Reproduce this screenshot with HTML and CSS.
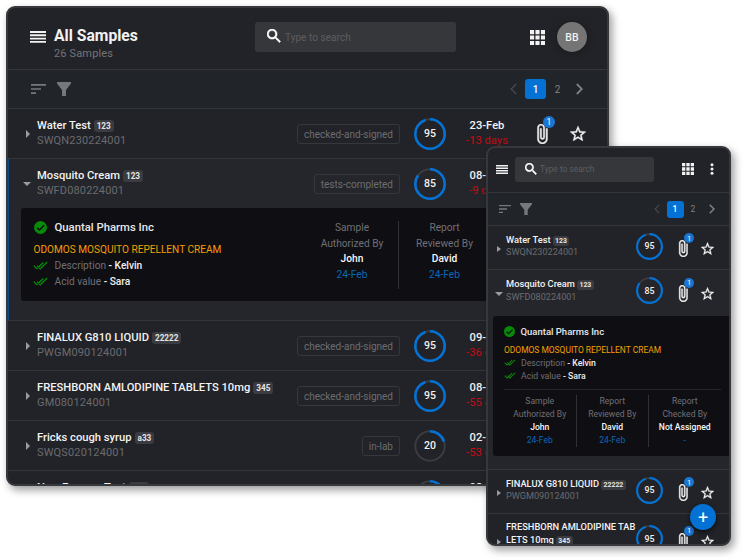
FILE: index.html
```html
<!DOCTYPE html>
<html lang="en">
<head>
<meta charset="utf-8">
<title>All Samples</title>
<link rel="stylesheet" href="styles.css">
</head>
<body>
<svg class="defs" aria-hidden="true">
  <symbol id="menu" viewBox="0 0 16 12"><path d="M0 1h16M0 4.3h16M0 7.6h16M0 10.9h16" stroke="currentColor" stroke-width="1.9"/></symbol>
  <symbol id="search" viewBox="3 3 18 18"><path fill="currentColor" stroke="currentColor" stroke-width=".7" d="M15.5 14h-.79l-.28-.27A6.47 6.47 0 0 0 16 9.5 6.5 6.5 0 1 0 9.5 16c1.61 0 3.09-.59 4.23-1.57l.27.28v.79l5 4.99L20.49 19l-4.99-5zm-6 0C7.01 14 5 11.99 5 9.5S7.01 5 9.5 5 14 7.01 14 9.5 11.99 14 9.5 14z"/></symbol>
  <symbol id="apps" viewBox="0 0 16 16"><path fill="currentColor" d="M0 0h4.4v4.4H0zM5.8 0h4.4v4.4H5.8zM11.6 0H16v4.4h-4.4zM0 5.8h4.4v4.4H0zM5.8 5.8h4.4v4.4H5.8zM11.6 5.8H16v4.4h-4.4zM0 11.6h4.4V16H0zM5.8 11.6h4.4V16H5.8zM11.6 11.6H16V16h-4.4z"/></symbol>
  <symbol id="dots" viewBox="0 0 4 12"><circle cx="2" cy="1.7" r="1.5" fill="currentColor"/><circle cx="2" cy="6" r="1.5" fill="currentColor"/><circle cx="2" cy="10.3" r="1.5" fill="currentColor"/></symbol>
  <symbol id="sort" viewBox="3 6 18 12"><path fill="currentColor" d="M3 18h6v-2H3v2zM3 6v2h18V6H3zm0 7h12v-2H3v2z"/></symbol>
  <symbol id="funnel" viewBox="0 0 14 14"><path fill="currentColor" d="M0 0h14v1.6L9 8v6H5V8L0 1.6z"/></symbol>
  <symbol id="left" viewBox="0 0 7 12"><path d="M6.2 1L1.2 6l5 5" fill="none" stroke="currentColor" stroke-width="1.5"/></symbol>
  <symbol id="right" viewBox="0 0 7 12"><path d="M.8 1l5 5-5 5" fill="none" stroke="currentColor" stroke-width="1.8"/></symbol>
  <symbol id="clip" viewBox="6 1 12 22"><path fill="currentColor" stroke="currentColor" stroke-width=".5" d="M16.5 6v11.5c0 2.21-1.79 4-4 4s-4-1.79-4-4V5a2.5 2.5 0 0 1 5 0v10.5c0 .55-.45 1-1 1s-1-.45-1-1V6H10v9.5a2.5 2.5 0 0 0 5 0V5c0-2.21-1.79-4-4-4S7 2.790 7 5v12.500c0 3.040 2.460 5.500 5.500 5.500s5.500-2.460 5.500-5.500V6h-1.500z"/></symbol>
  <symbol id="star" viewBox="2 2 20 19"><path fill="currentColor" stroke="currentColor" stroke-width=".5" d="M22 9.240l-7.190-.62L12 2 9.190 8.630 2 9.240l5.460 4.730L5.820 21 12 17.270 18.180 21l-1.630-7.030L22 9.240zM12 15.400l-3.760 2.270 1-4.280-3.320-2.880 4.380-.38L12 6.100l1.710 4.040 4.380.38-3.320 2.880 1 4.280L12 15.400z"/></symbol>
  <symbol id="ok" viewBox="0 0 14 14"><circle cx="7" cy="7" r="7" fill="#078a07"/><path d="M3.4 7.300l2.500 2.500 5-5.200" fill="none" stroke="#0f0e13" stroke-width="1.500"/></symbol>
  <symbol id="checks" viewBox="0 0 15 9"><path d="M.8 4.600l3 3.200M4.200 4.600l3 3.200L14.200 1M3.800 7.800L10.300 1.500" fill="none" stroke="#078a07" stroke-width="1.300"/></symbol>
  <symbol id="ring95" viewBox="0 0 32 32"><circle class="track" cx="16" cy="16" r="14.700"/><circle class="arc" cx="16" cy="16" r="14.700" pathLength="100" stroke-dasharray="95 100"/></symbol>
  <symbol id="ring85" viewBox="0 0 32 32"><circle class="track" cx="16" cy="16" r="14.700"/><circle class="arc" cx="16" cy="16" r="14.700" pathLength="100" stroke-dasharray="85 100"/></symbol>
  <symbol id="ring20" viewBox="0 0 32 32"><circle class="track" cx="16" cy="16" r="14.700"/><circle class="arc" cx="16" cy="16" r="14.700" pathLength="100" stroke-dasharray="20 100"/></symbol>
</svg>

<main class="window desktop">
  <header class="header">
    <svg class="menu"><use href="#menu"/></svg>
    <div class="heading"><h1>All Samples</h1><p>26 Samples</p></div>
    <div class="search"><svg><use href="#search"/></svg><span>Type to search</span></div>
    <svg class="apps"><use href="#apps"/></svg>
    <div class="avatar">BB</div>
  </header>
  <div class="toolbar">
    <svg class="sort"><use href="#sort"/></svg>
    <svg class="funnel"><use href="#funnel"/></svg>
    <nav class="pager"><svg class="prev"><use href="#left"/></svg><b>1</b><span>2</span><svg><use href="#right"/></svg></nav>
  </div>
  <section class="sample">
    <div class="row">
      <i class="arrow"></i>
      <div class="info"><div class="name">Water Test<em>123</em></div><div class="code">SWQN230224001</div></div>
      <span class="chip">checked-and-signed</span>
      <div class="ring"><svg><use href="#ring95"/></svg><b>95</b></div>
      <div class="due"><b>23-Feb</b><span>-13 days</span></div>
      <div class="attach"><svg><use href="#clip"/></svg><span>1</span></div>
      <svg class="star"><use href="#star"/></svg>
    </div>
  </section>
  <section class="sample open">
    <div class="row">
      <i class="arrow"></i>
      <div class="info"><div class="name">Mosquito Cream<em>123</em></div><div class="code">SWFD080224001</div></div>
      <span class="chip">tests-completed</span>
      <div class="ring"><svg><use href="#ring85"/></svg><b>85</b></div>
      <div class="due"><b>08-Feb</b><span>-9 days</span></div>
    </div>
    <div class="panel">
      <div class="tests">
        <h2><svg><use href="#ok"/></svg>Quantal Pharms Inc</h2>
        <h3>ODOMOS MOSQUITO REPELLENT CREAM</h3>
        <p><svg><use href="#checks"/></svg>Description <b>- Kelvin</b></p>
        <p><svg><use href="#checks"/></svg>Acid value <b>- Sara</b></p>
      </div>
      <div class="signoffs">
        <div><span>Sample</span><span>Authorized By</span><b>John</b><time>24-Feb</time></div>
        <div><span>Report</span><span>Reviewed By</span><b>David</b><time>24-Feb</time></div>
      </div>
    </div>
  </section>
  <section class="sample">
    <div class="row">
      <i class="arrow"></i>
      <div class="info"><div class="name">FINALUX G810 LIQUID<em>22222</em></div><div class="code">PWGM090124001</div></div>
      <span class="chip">checked-and-signed</span>
      <div class="ring"><svg><use href="#ring95"/></svg><b>95</b></div>
      <div class="due"><b>09-Feb</b><span>-36 days</span></div>
    </div>
  </section>
  <section class="sample">
    <div class="row">
      <i class="arrow"></i>
      <div class="info"><div class="name">FRESHBORN AMLODIPINE TABLETS 10mg<em>345</em></div><div class="code">GM080124001</div></div>
      <span class="chip">checked-and-signed</span>
      <div class="ring"><svg><use href="#ring95"/></svg><b>95</b></div>
      <div class="due"><b>08-Feb</b><span>-55 days</span></div>
    </div>
  </section>
  <section class="sample">
    <div class="row">
      <i class="arrow"></i>
      <div class="info"><div class="name">Fricks cough syrup<em>a33</em></div><div class="code">SWQS020124001</div></div>
      <span class="chip">in-lab</span>
      <div class="ring"><svg><use href="#ring20"/></svg><b>20</b></div>
      <div class="due"><b>02-Feb</b><span>-53 days</span></div>
    </div>
  </section>
  <section class="sample">
    <div class="row">
      <i></i>
      <div class="info"><div class="name">New Enzyme Test<em>123</em></div><div class="code">&nbsp;</div></div>
      <span></span>
      <div class="ring"><svg><use href="#ring20"/></svg></div>
      <div class="due"><b>02-Feb</b><span>&nbsp;</span></div>
    </div>
  </section>
</main>

<main class="window mobile">
  <header class="header">
    <svg class="menu"><use href="#menu"/></svg>
    <div class="search"><svg><use href="#search"/></svg><span>Type to search</span></div>
    <svg class="apps"><use href="#apps"/></svg>
    <svg class="dots"><use href="#dots"/></svg>
  </header>
  <div class="toolbar">
    <svg class="sort"><use href="#sort"/></svg>
    <svg class="funnel"><use href="#funnel"/></svg>
    <nav class="pager"><svg class="prev"><use href="#left"/></svg><b>1</b><span>2</span><svg><use href="#right"/></svg></nav>
  </div>
  <section class="sample">
    <div class="row">
      <i class="arrow"></i>
      <div class="info"><div class="name">Water Test<em>123</em></div><div class="code">SWQN230224001</div></div>
      <div class="ring"><svg><use href="#ring95"/></svg><b>95</b></div>
      <div class="attach"><svg><use href="#clip"/></svg><span>1</span></div>
      <svg class="star"><use href="#star"/></svg>
    </div>
  </section>
  <section class="sample open">
    <div class="row">
      <i class="arrow"></i>
      <div class="info"><div class="name">Mosquito Cream<em>123</em></div><div class="code">SWFD080224001</div></div>
      <div class="ring"><svg><use href="#ring85"/></svg><b>85</b></div>
      <div class="attach"><svg><use href="#clip"/></svg><span>1</span></div>
      <svg class="star"><use href="#star"/></svg>
    </div>
    <div class="panel">
      <div class="tests">
        <h2><svg><use href="#ok"/></svg>Quantal Pharms Inc</h2>
        <h3>ODOMOS MOSQUITO REPELLENT CREAM</h3>
        <p><svg><use href="#checks"/></svg>Description <b>- Kelvin</b></p>
        <p><svg><use href="#checks"/></svg>Acid value <b>- Sara</b></p>
      </div>
      <div class="signoffs">
        <div><span>Sample</span><span>Authorized By</span><b>John</b><time>24-Feb</time></div>
        <div><span>Report</span><span>Reviewed By</span><b>David</b><time>24-Feb</time></div>
        <div><span>Report</span><span>Checked By</span><b>Not Assigned</b><time>-</time></div>
      </div>
    </div>
  </section>
  <section class="sample">
    <div class="row">
      <i class="arrow"></i>
      <div class="info"><div class="name">FINALUX G810 LIQUID<em>22222</em></div><div class="code">PWGM090124001</div></div>
      <div class="ring"><svg><use href="#ring95"/></svg><b>95</b></div>
      <div class="attach"><svg><use href="#clip"/></svg><span>1</span></div>
      <svg class="star"><use href="#star"/></svg>
    </div>
  </section>
  <section class="sample tall">
    <div class="row">
      <i class="arrow"></i>
      <div class="info"><div class="name">FRESHBORN AMLODIPINE TAB<br>LETS 10mg<em>345</em></div></div>
      <div class="ring"><svg><use href="#ring95"/></svg><b>95</b></div>
      <div class="attach"><svg><use href="#clip"/></svg><span>1</span></div>
      <svg class="star"><use href="#star"/></svg>
    </div>
  </section>
  <button class="fab">+</button>
</main>
</body>
</html>
```
FILE: styles.css
```css
* { box-sizing: border-box; }
body { margin: 0; width: 745px; height: 560px; overflow: hidden; position: relative; background: #fff; font-family: Roboto, sans-serif; color: #f2f2f2; }
h1, h2, h3, p { margin: 0; font-weight: 500; }
b { font-weight: 500; }
i, em { font-style: normal; }
svg { display: block; flex: none; }
.defs { position: absolute; width: 0; height: 0; }
.track, .arc { fill: none; stroke: #3b3c40; stroke-width: 2; }
.arc { stroke: #0472d4; stroke-width: 2.6; transform: rotate(-90deg); transform-origin: 16px 16px; }

.window { position: absolute; overflow: hidden; background: #222328; border: 2px solid #36383c; box-shadow: 3px 4px 8px rgba(0, 0, 0, .4); }
.header, .toolbar { display: flex; align-items: center; border-bottom: 1px solid #35363a; }
.toolbar { background: #212428; color: #77787b; }
.search { display: flex; align-items: center; background: #36373b; border-radius: 3px; color: #5c5d61; }
.search svg { color: #fff; }
.heading { align-self: flex-start; }
.heading p { color: #737478; font-weight: 400; }
.avatar { display: grid; place-items: center; border-radius: 50%; background: #757575; box-shadow: 0 1px 6px #18191c; font-weight: 500; }
.pager { display: flex; align-items: center; margin-left: auto; color: #808184; }
.pager .prev { color: #46474b; }
.pager b { display: grid; place-items: center; background: #0472d4; color: #fff; border-radius: 3px; }
.pager span { text-align: center; }

.sample { border-bottom: 1px solid #35363a; }
.open { background: #25262b; }
.row { display: grid; align-items: center; }
.arrow { width: 0; height: 0; border: solid transparent; border-left-color: #9a9b9d; }
.open .arrow { border-color: transparent; border-top-color: #9a9b9d; }
.name { display: block; white-space: nowrap; font-weight: 500; }
.name em { display: inline-block; background: #3b3c41; border-radius: 3px; color: #e4e4e4; font-weight: 700; }
.code { color: #6a6b6f; }
.chip { justify-self: end; border: 1px solid #36373b; border-radius: 3px; color: #6c6d71; }
.ring { display: grid; place-items: center; justify-self: center; }
.ring > * { grid-area: 1 / 1; }
.ring svg { width: 100%; height: 100%; }
.due { display: grid; justify-items: center; white-space: nowrap; }
.due span { color: #c20c12; }
.attach { position: relative; justify-self: center; }
.attach span { position: absolute; display: grid; place-items: center; border-radius: 50%; background: #1976d2; color: #fff; }

.panel { background: #0f0e13; }
.tests h2, .tests p { display: flex; align-items: center; white-space: pre; }
.tests h2 { color: #e8e8e8; }
.tests h3 { color: #f29f05; font-weight: 400; white-space: nowrap; }
.tests p { color: #707075; font-weight: 400; }
.tests b { color: #f0f0f0; }
.signoffs { display: grid; text-align: center; color: #707075; }
.signoffs div { display: grid; align-content: start; white-space: nowrap; }
.signoffs div + div { border-left: 1px solid #303136; }
.signoffs b { color: #f8f8f8; }
.signoffs time { color: #0868b8; }

.desktop { left: 6px; top: 6px; width: 603px; height: 480px; border-radius: 9px; }
.desktop .header { height: 62px; padding: 0 20px 3px 22px; }
.desktop .menu { width: 16px; height: 12px; }
.desktop .heading { margin-left: 8px; padding-top: 18px; width: 201px; }
.desktop h1 { font-size: 15.7px; font-weight: 700; line-height: 20px; }
.desktop .heading p { font-size: 11px; line-height: 16px; letter-spacing: .15px; }
.desktop .search { width: 201px; height: 30px; padding-left: 12px; font-size: 10px; letter-spacing: .05px; }
.desktop .search svg { width: 14px; height: 14px; margin: 0 4px 2px 0; }
.desktop .apps { width: 15px; height: 15px; margin: 0 12px 0 auto; }
.desktop .avatar { width: 30px; height: 30px; font-size: 10.5px; }
.desktop .toolbar { height: 39px; padding: 0 24px 0 23px; }
.desktop .sort { width: 15px; height: 10px; }
.desktop .funnel { width: 14px; height: 14px; margin-left: 11px; }
.desktop .pager { font-size: 10px; }
.desktop .pager svg { width: 7px; height: 12px; }
.desktop .pager b { width: 21px; height: 20px; margin-left: 8px; }
.desktop .pager span { width: 23px; margin-right: 7px; }
.desktop .row { height: 49px; grid-template-columns: 29px 240px 123px 60px 54px 56px 16px; font-size: 11.2px; }
.desktop .arrow { margin: 1px 0 0 18px; border-width: 4px 0 4px 4.5px; }
.desktop .open .arrow { margin-left: 15px; border-width: 4.5px 4.500px 0; }
.desktop .name, .desktop .code, .desktop .due > * { line-height: 15px; }
.desktop .info, .desktop .due { padding-bottom: 1px; }
.desktop .name { height: 15px; }
.desktop .code { font-size: 11px; letter-spacing: .15px; }
.desktop .name em { height: 12px; margin-left: 3px; padding: 0 3px; line-height: 13px; font-size: 8.200px; vertical-align: 0; }
.desktop .chip { height: 20px; padding: 0 6px; line-height: 19px; font-size: 10px; }
.desktop .ring { width: 32px; height: 32px; font-size: 10.500px; }
.desktop .attach svg { width: 12px; height: 20px; }
.desktop .attach span { width: 12px; height: 12px; left: 7px; top: -8px; font-size: 8.500px; }
.desktop .star { width: 16px; height: 15px; }
.desktop .open { height: 162px; border-left: 1px solid #064a86; }
.desktop .open .row { margin-left: -1px; }
.desktop .panel { display: flex; margin: 0 12px; height: 93px; border-radius: 3px; }
.desktop .tests { width: 285px; padding: 12px 0 0 12px; font-size: 10.200px; }
.desktop h2 { height: 15px; font-size: 11.300px; }
.desktop h2 svg { width: 13px; height: 13px; margin: 0 7.500px 0 1px; }
.desktop h3 { margin: 6px 0 0 .5px; height: 16px; line-height: 17px; font-size: 10.100px; }
.desktop .tests p { height: 16px; }
.desktop .tests p svg { width: 15px; height: 9px; margin: 0 6.500px 0 0; }
.desktop .signoffs { grid-template-columns: 92px 92px; height: 68px; margin-top: 13px; font-size: 10.200px; line-height: 15.700px; }
.desktop .signoffs div > :first-child { margin-top: -1px; }

.mobile { left: 486px; top: 146px; width: 245px; height: 400px; border-radius: 9px; }
.mobile .header { height: 45px; padding: 0 15px 2px 8px; }
.mobile .menu { width: 12px; height: 9px; }
.mobile .search { width: 139px; height: 25px; margin-left: 7px; padding-left: 10px; font-size: 8.400px; }
.mobile .search svg { width: 12px; height: 12px; margin: 0 3px 1px 0; }
.mobile .apps { width: 12px; height: 12px; margin-left: auto; }
.mobile .dots { width: 4px; height: 12px; margin-left: 16px; }
.mobile .toolbar { height: 33px; padding: 0 14px 0 11px; }
.mobile .sort { width: 12px; height: 8px; }
.mobile .funnel { width: 12px; height: 12px; margin-left: 9px; }
.mobile .pager { font-size: 8.500px; }
.mobile .pager svg { width: 6px; height: 10px; }
.mobile .pager b { width: 17px; height: 17px; margin-left: 7px; }
.mobile .pager span { width: 19px; margin-right: 6.500px; }
.mobile .row { height: 43px; grid-template-columns: 18px 128px 31px 36px 11px; column-gap: 0; font-size: 9.300px; }
.mobile .arrow { margin: 3px 0 0 9px; border-width: 3.500px 0 3.500px 4px; }
.mobile .open .arrow { margin-left: 7px; border-width: 4px 4px 0; }
.mobile .name, .mobile .code { line-height: 12.500px; }
.mobile .code { font-size: 9.100px; }
.mobile .info { padding-bottom: 3px; }
.mobile .name em { height: 10px; margin-left: 2px; padding: 0 2.500px; line-height: 11px; font-size: 6.900px; vertical-align: 0; }
.mobile .ring { width: 27px; height: 27px; font-size: 8.800px; margin-bottom: 3px; }
.mobile .attach { margin-top: 2px; }
.mobile .attach svg { width: 10px; height: 17px; }
.mobile .attach span { width: 10px; height: 10px; left: 6px; top: -7px; font-size: 7.500px; }
.mobile .star { width: 13px; height: 13px; margin-top: 2px; }
.mobile .open { height: 200px; }
.mobile .open .row { height: 46px; padding-bottom: 2px; }
.mobile .panel { margin-left: 5px; width: 248px; height: 140px; border-radius: 3px; padding: 9px 0 0 11px; }
.mobile .tests { font-size: 8.700px; }
.mobile h2 { height: 13px; font-size: 9.500px; }
.mobile h2 svg { width: 11px; height: 11px; margin-right: 5.500px; }
.mobile h3 { height: 13px; margin-top: 5px; line-height: 14px; font-size: 8.450px; }
.mobile .tests p { height: 13px; }
.mobile .tests p svg { width: 12px; height: 7px; margin-right: 5px; }
.mobile .signoffs { grid-template-columns: 71.500px 72.500px 72.500px; width: 217px; margin-top: 7px; padding-top: 5px; border-top: 1px solid #25262a; font-size: 8.600px; line-height: 13px; }
.mobile .tall .row { height: 52px; }
.mobile .tall .info { align-self: start; padding-top: 7px; }
.fab { position: absolute; left: 202px; top: 356px; width: 26px; height: 26px; padding: 0; border: 0; border-radius: 50%; background: #0472d4; color: #fff; font: 400 18px/25px Roboto, sans-serif; box-shadow: 0 2px 5px rgba(0, 0, 0, .6); }
```
